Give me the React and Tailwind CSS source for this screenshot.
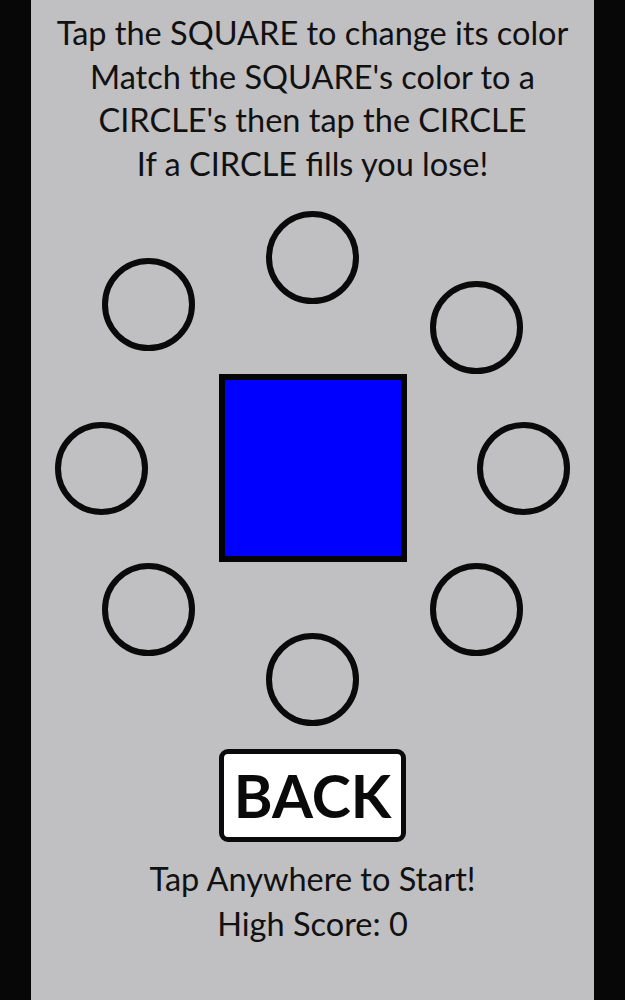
import React from 'react'

const font = { fontFamily: 'Lato, "Liberation Sans", sans-serif' }

// circle pins, positions relative to the board (top-left of each ring)
const circles = [
  { id: 'top', cls: 'left-[235px] top-[13px]' },
  { id: 'ul', cls: 'left-[71px] top-[60px]' },
  { id: 'ur', cls: 'left-[399px] top-[83px]' },
  { id: 'l', cls: 'left-[24px] top-[224px]' },
  { id: 'r', cls: 'left-[446px] top-[224px]' },
  { id: 'll', cls: 'left-[71px] top-[365px]' },
  { id: 'lr', cls: 'left-[399px] top-[365px]' },
  { id: 'b', cls: 'left-[235px] top-[435px]' },
]

function Board() {
  return (
    <div className="relative h-[540px] flex items-center justify-center">
      {circles.map((c) => (
        <div
          key={c.id}
          className={`absolute ${c.cls} w-[93px] h-[93px] rounded-full border-[6px] border-[#0a0a0a]`}
        />
      ))}
      <div className="w-[188px] h-[188px] bg-[#0000fe] border-[6px] border-[#050505]" />
    </div>
  )
}

export default function App() {
  return (
    <div className="flex h-[1000px] bg-[#070707]" style={font}>
      <div className="w-[31px] shrink-0" />
      <div className="w-[563px] shrink-0 bg-[#c0bfc1] text-[#111] flex flex-col">
        <div className="h-[198px] pt-[11px] text-center text-[32.5px] leading-[43.5px] whitespace-nowrap">
          <p>Tap the SQUARE to change its color</p>
          <p>Match the SQUARE's color to a</p>
          <p>CIRCLE's then tap the CIRCLE</p>
          <p>If a CIRCLE fills you lose!</p>
        </div>

        <Board />

        <div className="flex justify-center mt-[11px]">
          <button className="w-[187px] h-[93px] bg-white border-[5px] border-[#0a0a0a] rounded-[9px] flex items-center justify-center text-[59px] font-bold leading-none text-[#0a0a0a]">
            BACK
          </button>
        </div>

        <div className="mt-[14px] text-center text-[32.5px] leading-[45px]">
          <p>Tap Anywhere to Start!</p>
          <p>High Score: 0</p>
        </div>
      </div>
      <div className="flex-1" />
    </div>
  )
}
